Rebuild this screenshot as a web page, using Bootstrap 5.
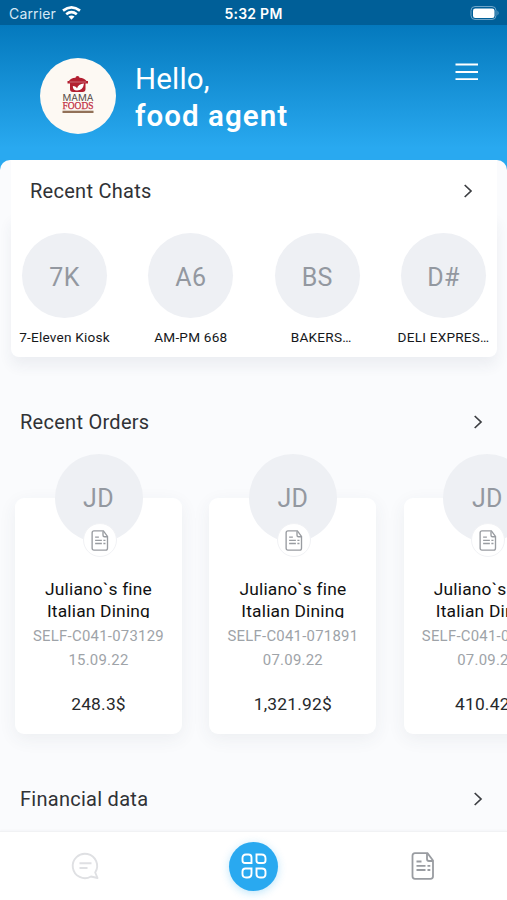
<!DOCTYPE html>
<html lang="en">
<head>
<meta charset="utf-8">
<meta name="viewport" content="width=device-width, initial-scale=1">
<title>Food agent</title>
<link href="https://cdn.jsdelivr.net/npm/bootstrap@5.3.0/dist/css/bootstrap.min.css" rel="stylesheet">
<style>
body{font-family:Roboto,"Liberation Sans",sans-serif;color:#303236}
.shell{width:507px;height:900px;background:linear-gradient(#0479bd 25px,#29a9f0 148px)}
.status{height:25px;background:#005f98;font:400 14px/27px Inter,sans-serif;padding:0 7px 0 9px;color:#d5e8f5}
.status .carrier{letter-spacing:.15px}
.status .clock{font-weight:600;color:#fff;letter-spacing:.25px}
.hero{height:135px;padding:33px 28px 0 40px}
.logo{width:76px;height:76px}
.greet{font-size:29.5px;line-height:36px;padding-top:3px;margin-left:19px}
.greet .hi{font-weight:400;letter-spacing:.2px}
.greet .who{font-weight:600;letter-spacing:1.05px;padding-top:1px}
.menu{margin-top:4px}
.sheet{background:#fafbfd;border-radius:10px 10px 0 0}
.chats{margin:0 10px 0 11px;height:197px}
.title{font-size:20px;line-height:24px;letter-spacing:.27px;margin:0;font-weight:400}
.chats .bar{padding:19px 24px 11px 19px}
.people{padding:19px 6px 0;height:143px;border-radius:0 0 8px 8px;box-shadow:0 9px 14px rgba(50,65,90,.065)}
.person{width:95px}
.face{width:85px;height:85px;background:#eef0f4;color:#9398a0;font-size:25px;letter-spacing:.3px;padding-top:4px}
.person .name{font-size:13.6px;line-height:18px;margin-top:10px;color:#16181b;font-weight:400;letter-spacing:.22px}
.bar-wide{padding:0 24px 0 20px}
.orders{padding:0 0 0 15px;gap:27.4px;margin-top:64px}
.order{width:167px;height:236px;border-radius:9px;box-shadow:0 5px 18px rgba(50,65,90,.07)}
.order .face{width:88px;height:88px;margin-top:-44px;padding-top:1px}
.slip{width:34px;height:34px;left:28px;top:69px;border:1px solid #f1f2f5}
.shop{font-size:17.4px;line-height:22px;height:41px;margin-top:35px;padding-top:1px;color:#111;letter-spacing:.18px}
.code{font-size:14.9px;line-height:23.5px;margin-top:7px;color:#9ea3a8;white-space:nowrap;letter-spacing:.26px}
.sum{font-size:17.4px;line-height:24px;margin-top:20px;color:#26282b;letter-spacing:.2px}
.tabs{height:69px;border-top:1px solid #f1f2f4;box-shadow:0 -1px 2px rgba(50,65,90,.03)}
.home{width:49px;height:49px;background:#29a9f0;box-shadow:0 2px 8px rgba(41,169,240,.3)}
svg{display:block}
</style>
</head>
<body>
<svg width="0" height="0" class="position-absolute">
<symbol id="doc" viewBox="0 0 24 28"><g fill="none" stroke="#999ca1" stroke-width="1.8"><path d="M4 1.200h12.500l5.500 7.300v15.800q0 2.500-2.500 2.500H4q-2.500 0-2.500-2.500V3.700Q1.500 1.200 4 1.200z"/><path d="M16 1.500v5.500q0 2 2 2h4"/><path d="M5.500 9.500h5M5.500 13.800h9M5.500 18h9M16.500 13.800h2.800M16.500 18h2.800"/></g></symbol>
<symbol id="go" viewBox="0 0 10 16"><path d="M1.700 2l6.300 6-6.300 6" fill="none" stroke="#3c3e42" stroke-width="1.700"/></symbol>
</svg>
<div class="shell d-flex flex-column overflow-hidden">
  <div class="status d-flex justify-content-between position-relative">
    <div class="d-flex"><span class="carrier">Carrier</span>
      <svg class="ms-1" width="22" height="25" viewBox="0 0 22 25" fill="none" stroke="#fff" stroke-width="2.700"><path d="M3 10.600Q11.500 4 20 10.600"/><path d="M6.200 14.200Q11.500 10 16.800 14.200"/><path d="M11.500 19.800l-3-3.200q3-2.400 6 0z" fill="#fff" stroke="none"/></svg>
    </div>
    <span class="clock position-absolute start-50 translate-middle-x">5:32 PM</span>
    <svg width="31" height="25" viewBox="0 0 31 25"><rect x="2" y="6.500" width="25" height="13" rx="4" fill="none" stroke="#6fa5c8"/><rect x="4" y="8.500" width="21.500" height="9.500" rx="2.300" fill="#fff"/><path d="M28.500 10.500q2.200 2.500 0 5z" fill="#6fa5c8"/></svg>
  </div>
  <header class="hero d-flex text-white">
    <svg class="logo" viewBox="0 0 76 76"><circle cx="38" cy="38" r="38" fill="#fdf9f3"/><path fill="#b31f30" d="M29 23q1.500-3 6.500-3.300 0-1.700 2-1.700t2 1.700Q44.500 20 46.500 23H48v2.500h-2.500V31q0 3-3 3H33q-3 0-3-3v-5.500h-2.500V23z"/><path d="M37 32.500q-4.200 0-4.200-4.500 3.500 0 4.200 2.500 1-4.500 7-5-1 7-7 7z" fill="#fff"/><path d="M29.500 24h16.500" stroke="#dba2a7" stroke-width=".6"/><text x="22.500" y="43.300" font-family="Inter,sans-serif" font-size="8.800" fill="#574c48" textLength="31" lengthAdjust="spacingAndGlyphs">MAMA</text><text x="22.500" y="51.300" font-family="Liberation Serif,serif" font-size="10.300" fill="#c12c41" stroke="#c12c41" stroke-width=".25" textLength="31" lengthAdjust="spacingAndGlyphs">FOODS</text><rect x="22.500" y="52.700" width="31" height="2.300" fill="#927158"/></svg>
    <div class="greet"><div class="hi">Hello,</div><div class="who">food agent</div></div>
    <svg class="menu ms-auto" width="24" height="20" viewBox="0 0 24 20" stroke="#fff" stroke-width="1.800"><path d="M.5 2.500h22.500M.5 10h22.500M.5 17.200h22.500"/></svg>
  </header>
  <main class="sheet flex-grow-1 overflow-hidden">
    <section class="chats">
      <div class="bar bg-white position-relative d-flex justify-content-between align-items-center"><h2 class="title">Recent Chats</h2><svg width="10" height="16"><use href="#go"/></svg></div>
      <div class="people bg-white d-flex justify-content-between text-center">
        <div class="person"><div class="face rounded-circle d-flex align-items-center justify-content-center mx-auto">7K</div><div class="name text-nowrap">7-Eleven Kiosk</div></div>
        <div class="person"><div class="face rounded-circle d-flex align-items-center justify-content-center mx-auto">A6</div><div class="name text-nowrap">AM-PM 668</div></div>
        <div class="person"><div class="face rounded-circle d-flex align-items-center justify-content-center mx-auto">BS</div><div class="name text-nowrap ps-2">BAKERS…</div></div>
        <div class="person"><div class="face rounded-circle d-flex align-items-center justify-content-center mx-auto">D#</div><div class="name text-nowrap">DELI EXPRES…</div></div>
      </div>
    </section>
    <section style="margin-top:53px">
      <div class="bar-wide d-flex justify-content-between align-items-center"><h2 class="title">Recent Orders</h2><svg width="10" height="16"><use href="#go"/></svg></div>
      <div class="orders d-flex">
        <article class="order bg-white flex-shrink-0 text-center">
          <div class="face rounded-circle d-flex align-items-center justify-content-center mx-auto position-relative">JD<span class="slip position-absolute bg-white rounded-circle d-flex align-items-center justify-content-center"><svg width="18" height="21"><use href="#doc"/></svg></span></div>
          <div class="shop overflow-hidden">Juliano`s fine<br>Italian Dining</div><div class="code">SELF-C041-073129<br>15.09.22</div><div class="sum">248.3$</div>
        </article>
        <article class="order bg-white flex-shrink-0 text-center">
          <div class="face rounded-circle d-flex align-items-center justify-content-center mx-auto position-relative">JD<span class="slip position-absolute bg-white rounded-circle d-flex align-items-center justify-content-center"><svg width="18" height="21"><use href="#doc"/></svg></span></div>
          <div class="shop overflow-hidden">Juliano`s fine<br>Italian Dining</div><div class="code">SELF-C041-071891<br>07.09.22</div><div class="sum">1,321.92$</div>
        </article>
        <article class="order bg-white flex-shrink-0 text-center">
          <div class="face rounded-circle d-flex align-items-center justify-content-center mx-auto position-relative">JD<span class="slip position-absolute bg-white rounded-circle d-flex align-items-center justify-content-center"><svg width="18" height="21"><use href="#doc"/></svg></span></div>
          <div class="shop overflow-hidden">Juliano`s fine<br>Italian Dining</div><div class="code">SELF-C041-070929<br>07.09.22</div><div class="sum">410.42$</div>
        </article>
      </div>
    </section>
    <section style="margin-top:53px"><div class="bar-wide d-flex justify-content-between align-items-center"><h2 class="title">Financial data</h2><svg width="10" height="16"><use href="#go"/></svg></div></section>
  </main>
  <nav class="tabs bg-white row g-0 align-items-center flex-shrink-0">
    <div class="col d-flex justify-content-center"><svg width="30" height="30" viewBox="0 0 30 30" fill="none" stroke="#dfe0e3" stroke-width="1.900"><path d="M25.200 21.500A12.200 12.200 0 1 0 21 25.500L27.500 27z" stroke-linejoin="round"/><path d="M9.500 12.300h12M9.500 17h8"/></svg></div>
    <div class="col d-flex justify-content-center"><div class="home rounded-circle d-flex align-items-center justify-content-center"><svg width="28" height="28" viewBox="0 0 28 28" fill="none" stroke="#fff" stroke-width="1.900"><path d="M6 2.500H8.500Q11.500 2.500 11.500 5.500V11H5Q2.500 11 2.500 8.500V6Q2.500 2.500 6 2.500zM16.500 2.500H21.500q4 0 4 4v2q0 2.500-2.500 2.500h-4q-2.500 0-2.500-2.500zM5.500 16.500H11.500V21.500q0 4-4 4h-1.500Q2.500 25.500 2.500 22v-2.500Q2.500 16.500 5.500 16.500zM16.500 16.500H22q3.500 0 3.500 3v2.500q0 3.500-3.500 3.500H20q-3.500 0-3.500-3.500z"/></svg></div></div>
    <div class="col d-flex justify-content-center"><svg width="24" height="28"><use href="#doc"/></svg></div>
  </nav>
</div>
<script src="https://cdn.jsdelivr.net/npm/bootstrap@5.3.0/dist/js/bootstrap.bundle.min.js"></script>
</body>
</html>
